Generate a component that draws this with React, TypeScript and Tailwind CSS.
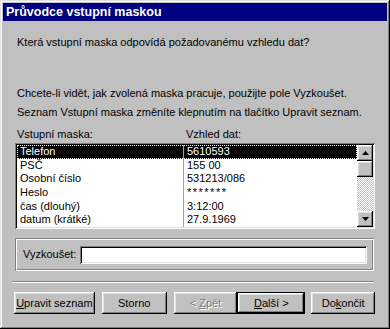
const raised =
  "shadow-[inset_-1px_-1px_#000,inset_1px_1px_#fff,inset_-2px_-2px_#808080,inset_2px_2px_#dfdfdf]";
const sunken =
  "shadow-[inset_1px_1px_#808080,inset_-1px_-1px_#fff,inset_2px_2px_#000,inset_-2px_-2px_#dfdfdf]";

const rows = [
  { name: "Telefon", value: "5610593" },
  { name: "PSČ", value: "155 00" },
  { name: "Osobní číslo", value: "531213/086" },
  { name: "Heslo", value: "*******" },
  { name: "čas (dlouhý)", value: "3:12:00" },
  { name: "datum (krátké)", value: "27.9.1969" },
];

const Arrow = ({ down }: { down?: boolean }) => (
  <svg width="7" height="4" viewBox="0 0 7 4">
    <polygon points={down ? "0,0 7,0 3.5,4" : "3.5,0 7,4 0,4"} fill="#000" />
  </svg>
);

const Scrollbar = () => (
  <div className="w-[16px] flex flex-col">
    <div className={`h-[16px] bg-[#c0c0c0] flex items-center justify-center ${raised}`}>
      <Arrow />
    </div>
    <div className={`h-[16px] bg-[#c0c0c0] ${raised}`} />
    <div className="flex-1 bg-[repeating-conic-gradient(#c0c0c0_0_25%,#fff_0_50%)] bg-[length:2px_2px]" />
    <div className={`h-[16px] bg-[#c0c0c0] flex items-center justify-center ${raised}`}>
      <Arrow down />
    </div>
  </div>
);

const MaskList = () => (
  <div className={`mt-[2px] h-[86px] p-[2px] bg-white flex ${sunken}`}>
    <div className="flex-1 flex flex-col overflow-hidden">
      {rows.map((r, i) => (
        <div
          key={r.name}
          className={
            i === 0
              ? "h-[13.6px] shrink-0 flex items-center bg-black text-white outline-1 outline-dotted outline-white -outline-offset-1"
              : "h-[13.6px] shrink-0 flex items-center"
          }
        >
          <span className="w-[166px] pl-[3px] whitespace-nowrap">{r.name}</span>
          <span
            className={
              r.name === "Heslo"
                ? "h-full border-l border-[#a0a0a0] pl-[3px] flex items-center whitespace-nowrap tracking-[1.5px]"
                : "h-full border-l border-[#a0a0a0] pl-[3px] flex items-center whitespace-nowrap"
            }
          >
            {r.value}
          </span>
        </div>
      ))}
    </div>
    <Scrollbar />
  </div>
);

const Button = ({
  children,
  className,
  isDefault,
}: {
  children: React.ReactNode;
  className: string;
  isDefault?: boolean;
}) =>
  isDefault ? (
    <div className={`h-[22px] border border-black ${className}`}>
      <div className={`h-full flex items-center justify-center ${raised}`}>{children}</div>
    </div>
  ) : (
    <div className={`h-[22px] flex items-center justify-center ${raised} ${className}`}>{children}</div>
  );

export default function App() {
  return (
    <div className="w-[390px] h-[329px] bg-[#c0c0c0] p-[3px] flex flex-col font-['Liberation_Sans',Arial,sans-serif] text-[11px] leading-[13px] text-black shadow-[inset_-1px_-1px_#000,inset_1px_1px_#dfdfdf,inset_-2px_-2px_#808080,inset_2px_2px_#fff]">
      <div className="h-[18px] bg-[#000080] text-white font-bold text-[12.5px] px-[3px] flex items-center">
        Průvodce vstupní maskou
      </div>
      <div className="flex-1 px-[12px] flex flex-col">
        <p className="mt-[15px] pl-[2px]">Která vstupní maska odpovídá požadovanému vzhledu dat?</p>
        <p className="mt-[38px] pl-[2px]">Chcete-li vidět, jak zvolená maska pracuje, použijte pole Vyzkoušet.</p>
        <p className="mt-[6px] pl-[2px]">Seznam Vstupní maska změníte klepnutím na tlačítko Upravit seznam.</p>
        <div className="mt-[9px] flex">
          <span className="w-[171px] pl-[2px]">Vstupní maska:</span>
          <span>Vzhled dat:</span>
        </div>
        <MaskList />
        <div className="mt-[9px] h-[33px] mr-[1px] flex items-center pl-[8px] pr-[7px] shadow-[inset_1px_1px_#808080,inset_-1px_-1px_#fff,inset_2px_2px_#fff,inset_-2px_-2px_#808080]">
          <span>Vyzkoušet:</span>
          <div className={`ml-[4px] flex-1 h-[18px] bg-white ${sunken}`} />
        </div>
        <div className="mt-[10px] -ml-[3px] mr-[1px] h-[2px] border-t border-b border-t-[#808080] border-b-white" />
        <div className="mt-[9px] -ml-[1px] flex">
          <Button className="w-[81px]">
            <span>
              <span className="underline">U</span>pravit seznam
            </span>
          </Button>
          <Button className="w-[65px] ml-[7px]">Storno</Button>
          <Button className="w-[64px] ml-[7px] text-[#808080] [text-shadow:1px_1px_#fff]">
            <span>
              &lt; <span className="underline">Z</span>pět
            </span>
          </Button>
          <Button className="w-[68px]" isDefault>
            <span>
              <span className="underline">D</span>alší &gt;
            </span>
          </Button>
          <Button className="w-[64px] ml-[6px]">
            <span>
              Do<span className="underline">k</span>ončit
            </span>
          </Button>
        </div>
      </div>
    </div>
  );
}
